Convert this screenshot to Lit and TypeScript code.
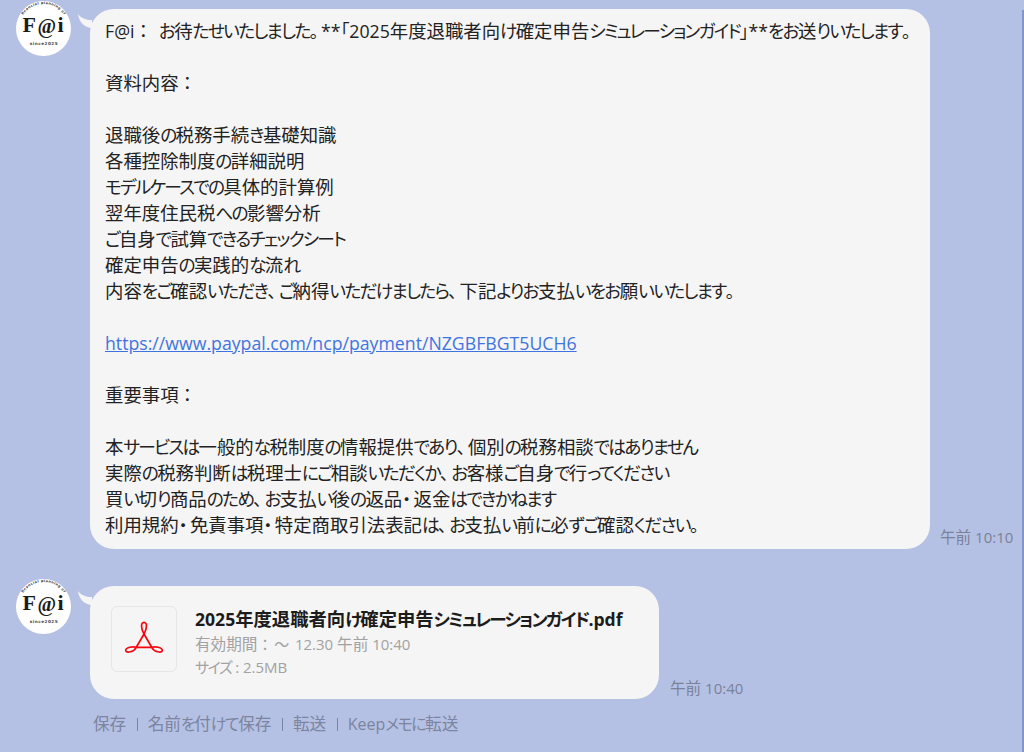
import { LitElement, html, css, svg } from "lit";
import { customElement } from "lit/decorators.js";

const logo = (id: string) => html`<svg class="avatar" viewBox="0 0 55 55" width="55" height="55">
  <circle cx="27.5" cy="27.5" r="27.5" fill="#fff"></circle>
  <defs><path id=${id} d="M7 14 A24.5 24.5 0 0 1 48 14"></path></defs>
  <text class="arc"><textPath href=${"#" + id} textLength="48">financial planning of</textPath></text>
  <text class="mark" x="6.5" y="31">F</text>
  <text class="mark at" x="21.5" y="32">@</text>
  <text class="mark" x="41.5" y="31">i</text>
  <text class="since" x="28" y="43.5" text-anchor="middle">since2025</text>
</svg>`;

const tail = svg`<path d="M0 0 C3 4 8 6 14 6 L14 14 C8 14 1 9 0 0 Z" fill="#f5f5f5"></path>`;

const pdf = html`<svg viewBox="0 0 40 40" width="40" height="40" fill="none" stroke="#f8050f" stroke-width="1.7" stroke-linejoin="round">
  <path d="M20 15 C17 10 16.5 3.3 20 3.3 C23.5 3.3 23 10 20 15 L27.7 28.3 C31 27 38.5 28.5 38.3 31.5 C38 34.5 30 33 27.7 28.3 L12.3 28.3 C10 33 2 34.5 1.7 31.5 C1.5 28.5 9 27 12.3 28.3 L20 15 Z"></path>
</svg>`;

/* Splits a string into runs by script, so each run can take the proportions of the reference's UI font. */
const CLASSES: [RegExp, string][] = [
  [/^[\u3041-\u309f]+/, "h"],
  [/^\u30fb+/, "q"],
  [/^[\u30a0-\u30fa\u30fc-\u30ff]+/, "k"],
  [/^[\u3001\u3002]+/, "q"],
  [/^[\uff1a\uff5e]+/, "p"],
  [/^[\u3400-\u9fff]+/, "c"],
];
function runs(text: string) {
  const out: unknown[] = [];
  let rest = text;
  while (rest.length) {
    let matched = false;
    for (const [re, cls] of CLASSES) {
      const m = rest.match(re);
      if (m) {
        out.push(html`<span class=${cls}>${m[0]}</span>`);
        rest = rest.slice(m[0].length);
        matched = true;
        break;
      }
    }
    if (!matched) {
      const m = rest.match(/^[^\u3041-\u309f\u30a0-\u30ff\u3001\u3002\uff1a\uff5e\u3400-\u9fff]+/);
      out.push(m ? m[0] : rest[0]);
      rest = rest.slice(m ? m[0].length : 1);
    }
  }
  return out;
}

@customElement("app-root")
export class AppRoot extends LitElement {
  static styles = css`
    :host {
      display: block;
      position: relative;
      width: 1024px;
      height: 752px;
      overflow: hidden;
      background: #b5c1e4;
      font-family: "Open Sans", "Noto Sans CJK JP", sans-serif;
      font-feature-settings: "palt";
      color: #222;
    }
    .edge { position: absolute; right: 0; top: 10px; bottom: 0; width: 2px; background: #8296cc; }
    .h { letter-spacing: -0.095em; }
    .k { letter-spacing: -0.1em; }
    .c { font-size: 1.04em; letter-spacing: 0; }
    .p { font-feature-settings: normal; letter-spacing: 0.12em; }
    .q { letter-spacing: 0.14em; }
    .row {
      display: flex;
      align-items: flex-end;
      gap: 10px;
      padding-left: 90px;
      position: relative;
    }
    .first { padding-top: 9px; }
    .second { padding-top: 37px; }
    .second .time { margin-left: 1px; padding-bottom: 1px; }
    .avatar { position: absolute; left: 16px; overflow: visible; }
    .first .avatar { top: 1px; }
    .second .avatar { top: 30px; }
    .arc { font: 700 3.4px "DejaVu Sans", sans-serif; fill: #333; }
    .mark { font: 700 22px "Liberation Serif", serif; fill: #1c1c1c; }
    .at { font-size: 20px; }
    .since { font: 700 4.2px "DejaVu Sans", sans-serif; letter-spacing: 0.5px; fill: #444; }
    .bubble {
      position: relative;
      background: #f5f5f5;
      border-radius: 24px;
    }
    .tail { position: absolute; left: -12px; top: 5px; }
    .msg {
      width: 840px;
      box-sizing: border-box;
      padding: 9px 15px 11px;
      font-size: 17.7px;
      line-height: 26px;
    }
    .line { display: block; height: 26px; white-space: nowrap; }
    a { color: #3f74e0; text-decoration: underline; }
    .time { font-size: 15px; color: #7a8199; line-height: 20px; padding-bottom: 2px; }
    .file {
      width: 569px;
      height: 113px;
      box-sizing: border-box;
      padding: 20px 21px;
      display: flex;
      gap: 18px;
    }
    .thumb {
      width: 66px;
      height: 66px;
      box-sizing: border-box;
      border: 1px solid #e6e6e6;
      border-radius: 6px;
      display: flex;
      align-items: center;
      justify-content: center;
    }
    .name { font-size: 17.6px; font-weight: 700; line-height: 26px; margin-bottom: 1px; white-space: nowrap; color: #1c1c1c; }
    .meta { font-size: 15px; line-height: 23px; color: #a2a2a2; white-space: nowrap; }
    .actions {
      display: flex;
      align-items: center;
      padding: 14px 0 0 93px;
      font-size: 16px;
      line-height: 22px;
      color: #7c84a0;
    }
    .sep { width: 1px; height: 13px; background: #7c84a0; margin: 0 10px 0 10.5px; }
  `;

  private lines = [
    "F@i： お待たせいたしました。**「2025年度退職者向け確定申告シミュレーションガイド」**をお送りいたします。",
    "",
    "資料内容：",
    "",
    "退職後の税務手続き基礎知識",
    "各種控除制度の詳細説明",
    "モデルケースでの具体的計算例",
    "翌年度住民税への影響分析",
    "ご自身で試算できるチェックシート",
    "確定申告の実践的な流れ",
    "内容をご確認いただき、ご納得いただけましたら、下記よりお支払いをお願いいたします。",
    "",
    "@link",
    "",
    "重要事項：",
    "",
    "本サービスは一般的な税制度の情報提供であり、個別の税務相談ではありません",
    "実際の税務判断は税理士にご相談いただくか、お客様ご自身で行ってください",
    "買い切り商品のため、お支払い後の返品・返金はできかねます",
    "利用規約・免責事項・特定商取引法表記は、お支払い前に必ずご確認ください。",
  ];

  render() {
    const url = "https://www.paypal.com/ncp/payment/NZGBFBGT5UCH6";
    return html`
      <div class="row first">
        ${logo("arc1")}
        <div class="bubble msg">
          <svg class="tail" width="14" height="14" viewBox="0 0 14 14">${tail}</svg>
          ${this.lines.map((l) =>
            l === "@link"
              ? html`<span class="line"><a href="#">${url}</a></span>`
              : html`<span class="line">${runs(l)}</span>`
          )}
        </div>
        <div class="time">${runs("午前 10:10")}</div>
      </div>
      <div class="row second">
        ${logo("arc2")}
        <div class="bubble file">
          <svg class="tail" width="14" height="14" viewBox="0 0 14 14">${tail}</svg>
          <div class="thumb">${pdf}</div>
          <div>
            <div class="name">${runs("2025年度退職者向け確定申告シミュレーションガイド.pdf")}</div>
            <div class="meta">${runs("有効期間：～ 12.30 午前 10:40")}</div>
            <div class="meta">${runs("サイズ : 2.5MB")}</div>
          </div>
        </div>
        <div class="time">${runs("午前 10:40")}</div>
      </div>
      <div class="actions">
        <span>${runs("保存")}</span><i class="sep"></i>
        <span>${runs("名前を付けて保存")}</span><i class="sep"></i>
        <span>${runs("転送")}</span><i class="sep"></i>
        <span>${runs("Keepメモに転送")}</span>
      </div>
      <div class="edge"></div>
    `;
  }
}
